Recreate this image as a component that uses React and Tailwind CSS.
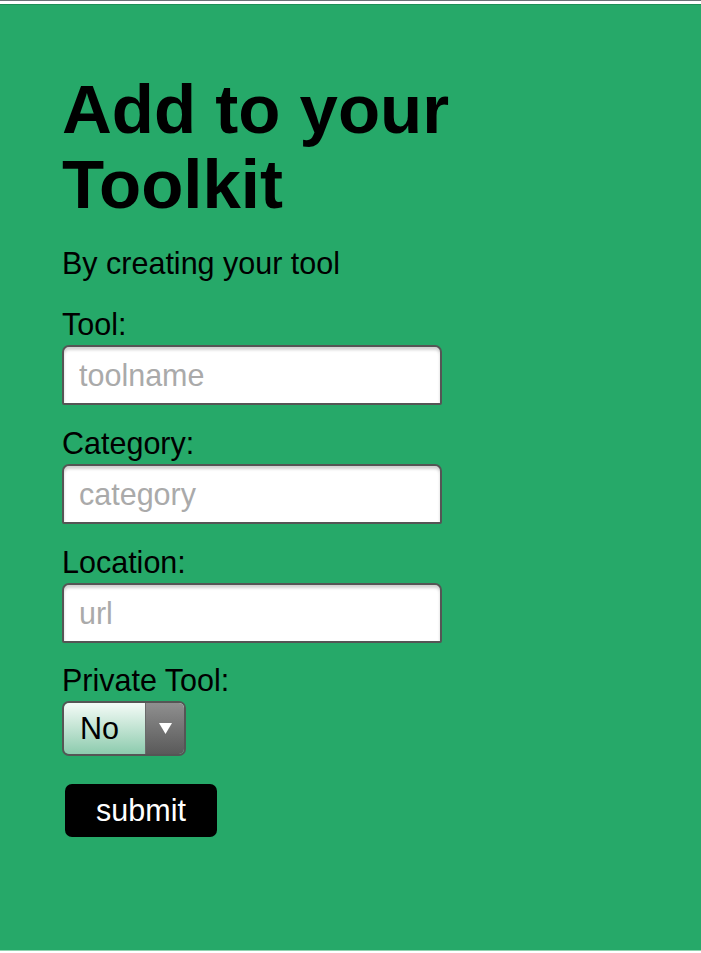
const fields = [
  { label: 'Tool:', placeholder: 'toolname' },
  { label: 'Category:', placeholder: 'category' },
  { label: 'Location:', placeholder: 'url' },
]

const App = () => (
  <div className="min-h-[953px] bg-white font-['Liberation_Sans',Arial,sans-serif] text-black">
    <div className="h-px bg-[#6c7378]" />
    <div className="mt-[3px] h-[947px] border-t border-[#1f8f57] border-b border-b-[#8fd4b0] bg-[#26a969] pl-[62px] pt-[67px]">
      <h1 className="max-w-[460px] text-[69px] font-bold leading-[75px]">Add to your Toolkit</h1>
      <p className="mt-[24px] text-[30.5px] leading-[34px]">By creating your tool</p>
      <form className="mt-[27px] flex flex-col" onSubmit={(e) => e.preventDefault()}>
        {fields.map((f, i) => (
          <div key={f.label} className={i === 0 ? '' : 'mt-[21px]'}>
            <label className="block text-[30.5px] leading-[34px]">{f.label}</label>
            <input
              type="text"
              placeholder={f.placeholder}
              className="mt-[4px] block h-[60px] w-[380px] rounded-t-[7px] rounded-b-[2px] border-2 border-[#555] bg-white pl-[15px] text-[30.5px] shadow-[inset_0_3px_3px_rgba(0,0,0,0.18)] outline-none placeholder:text-[#aaaaaa]"
            />
          </div>
        ))}
        <div className="mt-[20px]">
          <label className="block text-[30.5px] leading-[34px]">Private Tool:</label>
          <div className="relative mt-[4px] h-[55px] w-[124px] overflow-hidden rounded-[7px] border-2 border-[#555]">
            <select className="h-full w-full appearance-none bg-linear-to-b from-[#f4fbf7] to-[#8ccbae] pl-[16px] text-[30.5px] outline-none">
              <option>No</option>
              <option>Yes</option>
            </select>
            <div className="pointer-events-none absolute inset-y-0 right-0 flex w-[39px] items-center justify-center border-l border-[#6a6a6a] bg-linear-to-b from-[#8f8f8f] to-[#5a5a5a]">
              <svg width="13" height="11" viewBox="0 0 13 11">
                <path d="M0 0h13L6.5 11z" fill="#fff" />
              </svg>
            </div>
          </div>
        </div>
        <button
          type="submit"
          className="ml-[3px] mt-[28px] h-[53px] w-[152px] rounded-[7px] bg-black text-[30.5px] leading-none text-white"
        >
          submit
        </button>
      </form>
    </div>
  </div>
)

export default App
